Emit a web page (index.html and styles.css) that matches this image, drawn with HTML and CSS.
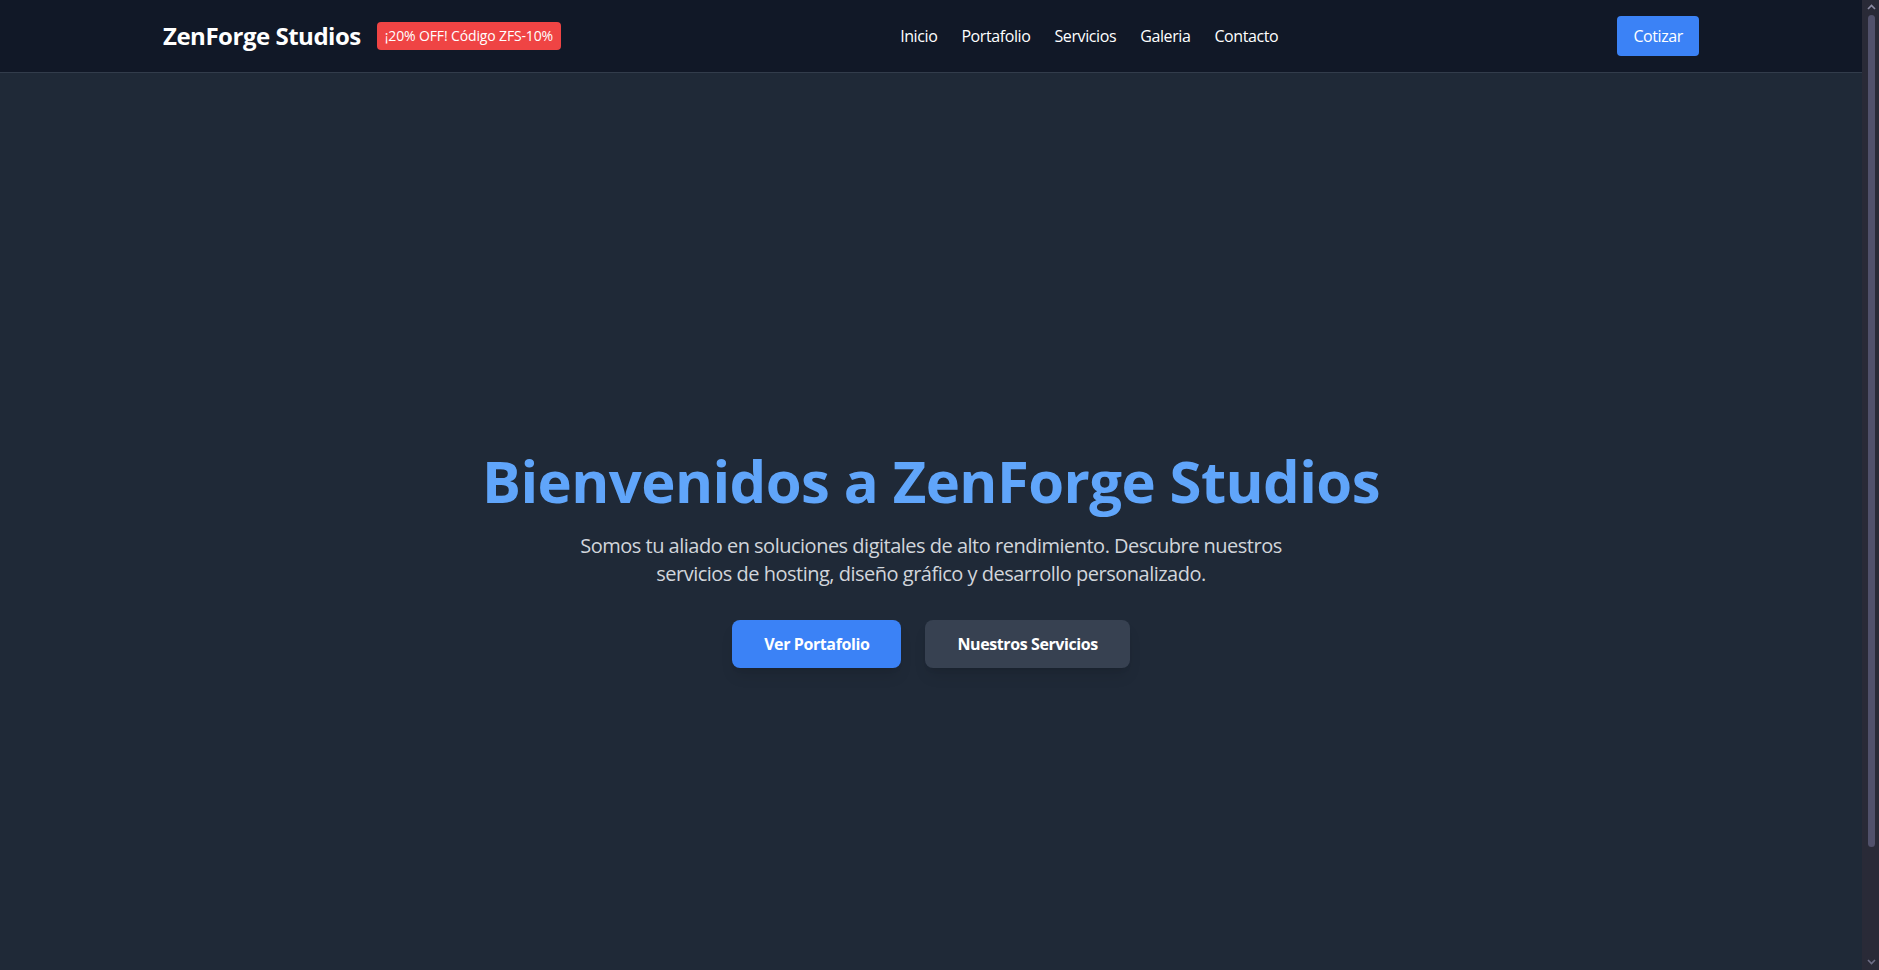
FILE: index.html
```html
<!DOCTYPE html>
<html lang="es">
<head>
<meta charset="utf-8">
<title>ZenForge Studios</title>
<link rel="stylesheet" href="styles.css">
</head>
<body>
<header class="site-header">
  <div class="container header-inner">
    <div class="brand">
      <a class="logo" href="#">ZenForge Studios</a>
      <span class="promo">¡20% OFF! Código ZFS-10%</span>
    </div>
    <nav class="nav">
      <a href="#">Inicio</a>
      <a href="#">Portafolio</a>
      <a href="#">Servicios</a>
      <a href="#">Galeria</a>
      <a href="#">Contacto</a>
    </nav>
    <a class="btn-quote" href="#">Cotizar</a>
  </div>
</header>
<main>
  <section class="hero">
    <div class="hero-content">
      <h1 class="hero-title">Bienvenidos a ZenForge Studios</h1>
      <p class="hero-text">Somos tu aliado en soluciones digitales de alto rendimiento. Descubre nuestros servicios de hosting, diseño gráfico y desarrollo personalizado.</p>
      <div class="hero-actions">
        <a class="btn btn-primary" href="#">Ver Portafolio</a>
        <a class="btn btn-secondary" href="#">Nuestros Servicios</a>
      </div>
    </div>
  </section>
</main>
<div class="scrollbar" aria-hidden="true">
  <svg class="sb-arrow sb-up" width="9" height="6" viewBox="0 0 9 6"><path d="M1 5 L4.5 1.5 L8 5" fill="none" stroke="#8b8ba3" stroke-width="1.6"/></svg>
  <div class="sb-thumb"></div>
  <svg class="sb-arrow sb-down" width="9" height="6" viewBox="0 0 9 6"><path d="M1 1 L4.5 4.5 L8 1" fill="none" stroke="#6e6e86" stroke-width="1.6"/></svg>
</div>
</body>
</html>
```

FILE: styles.css
```css
* { box-sizing: border-box; }
html { background: #1f2937; }
body {
  margin: 0;
  padding-right: 17px;
  font-family: "Open Sans", "Noto Sans", "Liberation Sans", sans-serif;
  letter-spacing: -0.025em;
  background: #1f2937;
  color: #fff;
}
a { color: inherit; text-decoration: none; }

.site-header {
  background: #111827;
  border-bottom: 1px solid #323c4b;
}
.container {
  max-width: 1536px;
  margin: 0 auto;
}
.header-inner {
  display: flex;
  align-items: center;
  justify-content: space-between;
  padding: 16px 0;
}
.brand {
  display: flex;
  align-items: center;
  gap: 16px;
}
.logo {
  font-size: 24px;
  line-height: 32px;
  font-weight: 700;
  color: #fff;
  letter-spacing: -0.02em;
}
.promo {
  background: #ef4444;
  color: #fff;
  font-size: 14px;
  line-height: 20px;
  padding: 4px 8px;
  border-radius: 4px;
  letter-spacing: -0.01em;
}
.nav {
  display: flex;
  gap: 24px;
  font-size: 16px;
  line-height: 24px;
}
.btn-quote {
  background: #3b82f6;
  color: #fff;
  font-size: 16px;
  line-height: 24px;
  padding: 8px 16px;
  border-radius: 4px;
}

.hero {
  min-height: 100vh;
  display: flex;
  align-items: center;
  justify-content: center;
  text-align: center;
  background: #1f2937;
}
.hero-title {
  margin: 0 0 21px;
  padding-top: 3px;
  font-size: 58px;
  line-height: 60px;
  font-weight: 700;
  letter-spacing: -0.01em;
  color: #60a5fa;
}
.hero-text {
  margin: 0 auto 32px;
  max-width: 768px;
  font-size: 20px;
  line-height: 28px;
  letter-spacing: -0.025em;
  color: #d1d5db;
}
.hero-actions {
  display: flex;
  justify-content: center;
  gap: 24px;
}
.btn {
  display: inline-block;
  padding: 12px 32px;
  font-size: 16px;
  line-height: 24px;
  font-weight: 700;
  border-radius: 8px;
  color: #fff;
  box-shadow: 0 10px 15px -3px rgba(0,0,0,0.1), 0 4px 6px -4px rgba(0,0,0,0.1);
}
.btn-primary { background: #3b82f6; }
.btn-secondary { background: #374151; }

/* static rendering of the window's scrollbar */
.scrollbar {
  position: fixed;
  top: 0;
  right: 0;
  width: 17px;
  height: 100vh;
  background: #292a37;
}
.sb-thumb {
  position: absolute;
  top: 15px;
  left: 6px;
  width: 7px;
  height: 832px;
  border-radius: 4px;
  background: #51516b;
}
.sb-arrow {
  position: absolute;
  left: 5px;
}
.sb-up { top: 4px; }
.sb-down { bottom: 5px; }
```
